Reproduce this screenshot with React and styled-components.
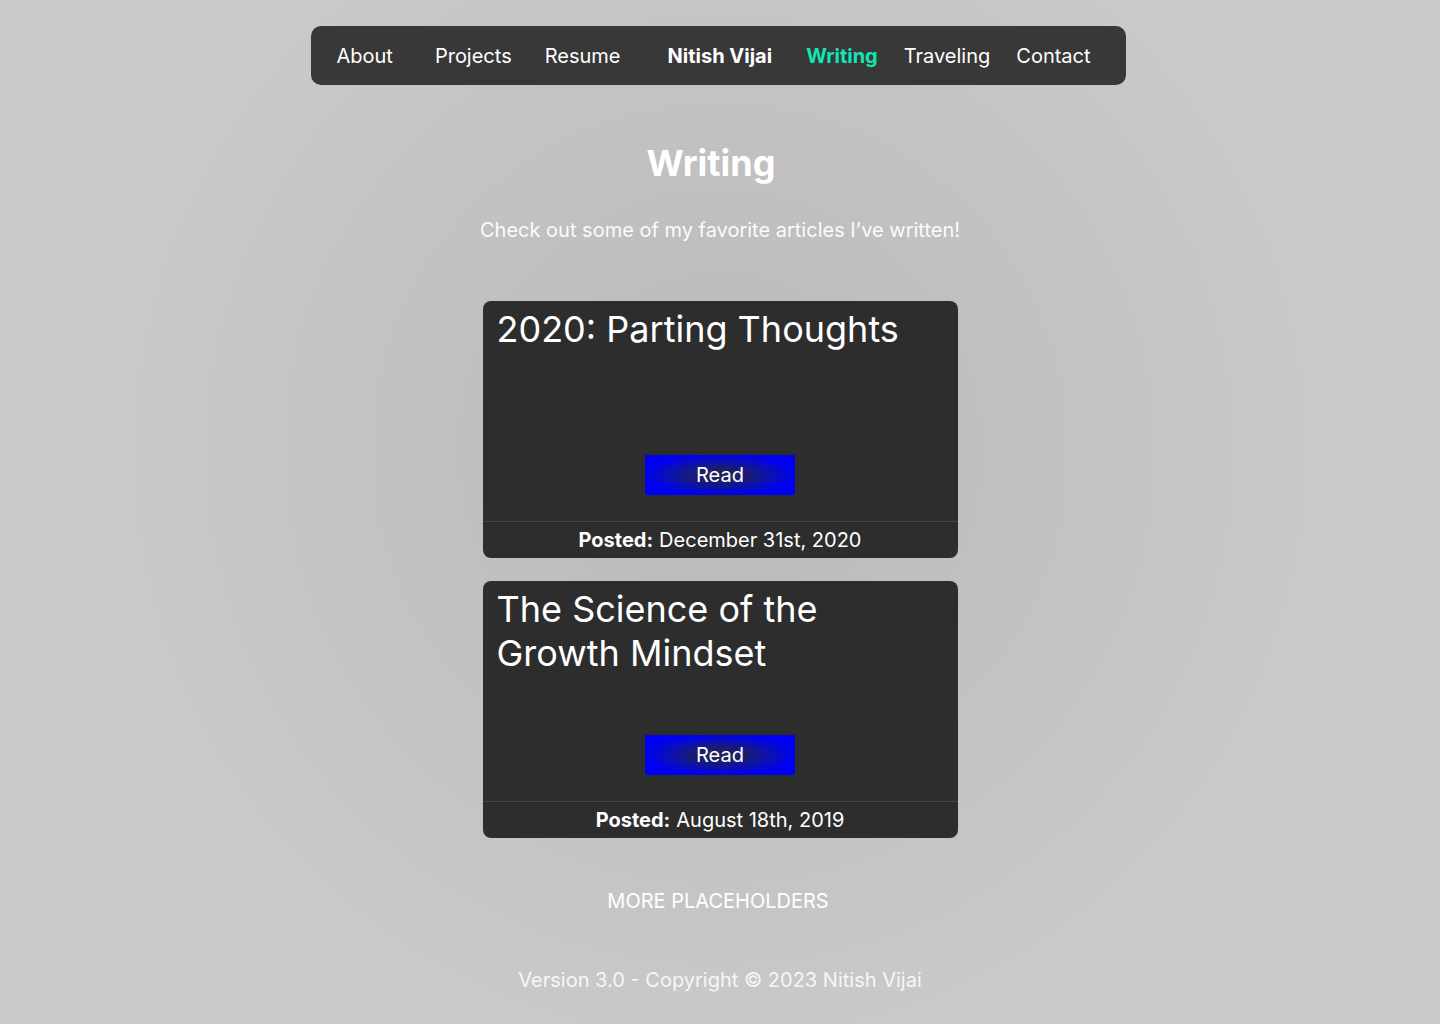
import styled, { createGlobalStyle } from 'styled-components'

const GlobalStyle = createGlobalStyle`
  html, body {
    margin: 0;
    padding: 0;
  }
  body {
    font-family: Inter, "Noto Sans", "Liberation Sans", sans-serif;
    color: #fff;
    background: #cbcbcb;
  }
`

const links = [
  { label: 'About', gap: 0 },
  { label: 'Projects', gap: 42 },
  { label: 'Resume', gap: 33 },
  { label: 'Nitish Vijai', gap: 47, bold: true },
  { label: 'Writing', gap: 34, bold: true, active: true },
  { label: 'Traveling', gap: 26 },
  { label: 'Contact', gap: 26 },
]

const articles = [
  { title: '2020: Parting Thoughts', date: 'December 31st, 2020' },
  { title: 'The Science of the Growth Mindset', date: 'August 18th, 2019' },
]

function App() {
  return (
    <Page>
      <GlobalStyle />
      <Nav>
        {links.map((l) => (
          <NavLink key={l.label} $gap={l.gap} $bold={l.bold} $active={l.active}>
            {l.label}
          </NavLink>
        ))}
      </Nav>

      <Title>Writing</Title>
      <Subtitle>Check out some of my favorite articles I’ve written!</Subtitle>

      <CardList>
        {articles.map((a) => (
          <Card key={a.title}>
            <CardBody>
              <CardTitle>{a.title}</CardTitle>
              <ReadButton>Read</ReadButton>
            </CardBody>
            <CardFooter>
              <b>Posted:</b> {a.date}
            </CardFooter>
          </Card>
        ))}
      </CardList>

      <More>MORE PLACEHOLDERS</More>
      <Footer>Version 3.0 - Copyright © 2023 Nitish Vijai</Footer>
    </Page>
  )
}

export default App

const Page = styled.div`
  min-height: 1024px;
  box-sizing: border-box;
  padding-top: 26px;
  display: flex;
  flex-direction: column;
  align-items: center;
  background: radial-gradient(circle at 50% 44%, #bbb8b8 0%, #c2c0c0 300px, #cbcbcb 650px);
`

const Nav = styled.nav`
  width: 815px;
  height: 59px;
  box-sizing: border-box;
  margin-right: 4px;
  padding: 0 26px;
  display: flex;
  align-items: center;
  background: #383838;
  border-radius: 10px;
`

const NavLink = styled.a`
  margin-left: ${(p) => p.$gap}px;
  font-size: 20px;
  line-height: 24px;
  font-weight: ${(p) => (p.$bold ? 700 : 400)};
  color: ${(p) => (p.$active ? '#12e6b4' : '#fff')};
  cursor: pointer;
  white-space: nowrap;
`

const Title = styled.h1`
  margin: 56px 0 0;
  font-size: 36px;
  line-height: 44px;
  font-weight: 700;
  transform: translateX(-9px);
`

const Subtitle = styled.p`
  margin: 33px 0 0;
  font-size: 20px;
  line-height: 24px;
  color: #fbfbfb;
`

const CardList = styled.div`
  margin-top: 59px;
  display: flex;
  flex-direction: column;
  gap: 23px;
`

const Card = styled.article`
  width: 475px;
  background: #2d2d2d;
  border-radius: 8px;
  overflow: hidden;
`

const CardBody = styled.div`
  height: 220px;
  box-sizing: border-box;
  padding: 6px 14px 26px;
  display: flex;
  flex-direction: column;
`

const CardTitle = styled.h2`
  margin: 0;
  width: 420px;
  font-size: 36px;
  line-height: 44px;
  font-weight: 400;
`

const ReadButton = styled.button`
  margin-top: auto;
  align-self: center;
  width: 150px;
  height: 40px;
  border: none;
  padding: 0;
  font-family: inherit;
  font-size: 20px;
  color: #fff;
  cursor: pointer;
  background: radial-gradient(ellipse at center, #262650 0%, #1a1d70 25%, #0a0fb8 50%, #0000f4 72%);
`

const CardFooter = styled.div`
  height: 36px;
  border-top: 1px solid #474747;
  display: flex;
  align-items: center;
  justify-content: center;
  gap: 6px;
  font-size: 20px;
  b {
    font-weight: 700;
  }
`

const More = styled.div`
  margin-top: 51px;
  font-size: 20px;
  line-height: 24px;
  transform: translateX(-2px);
`

const Footer = styled.footer`
  margin-top: 55px;
  font-size: 20px;
  line-height: 24px;
  color: #f6f6f6;
`
